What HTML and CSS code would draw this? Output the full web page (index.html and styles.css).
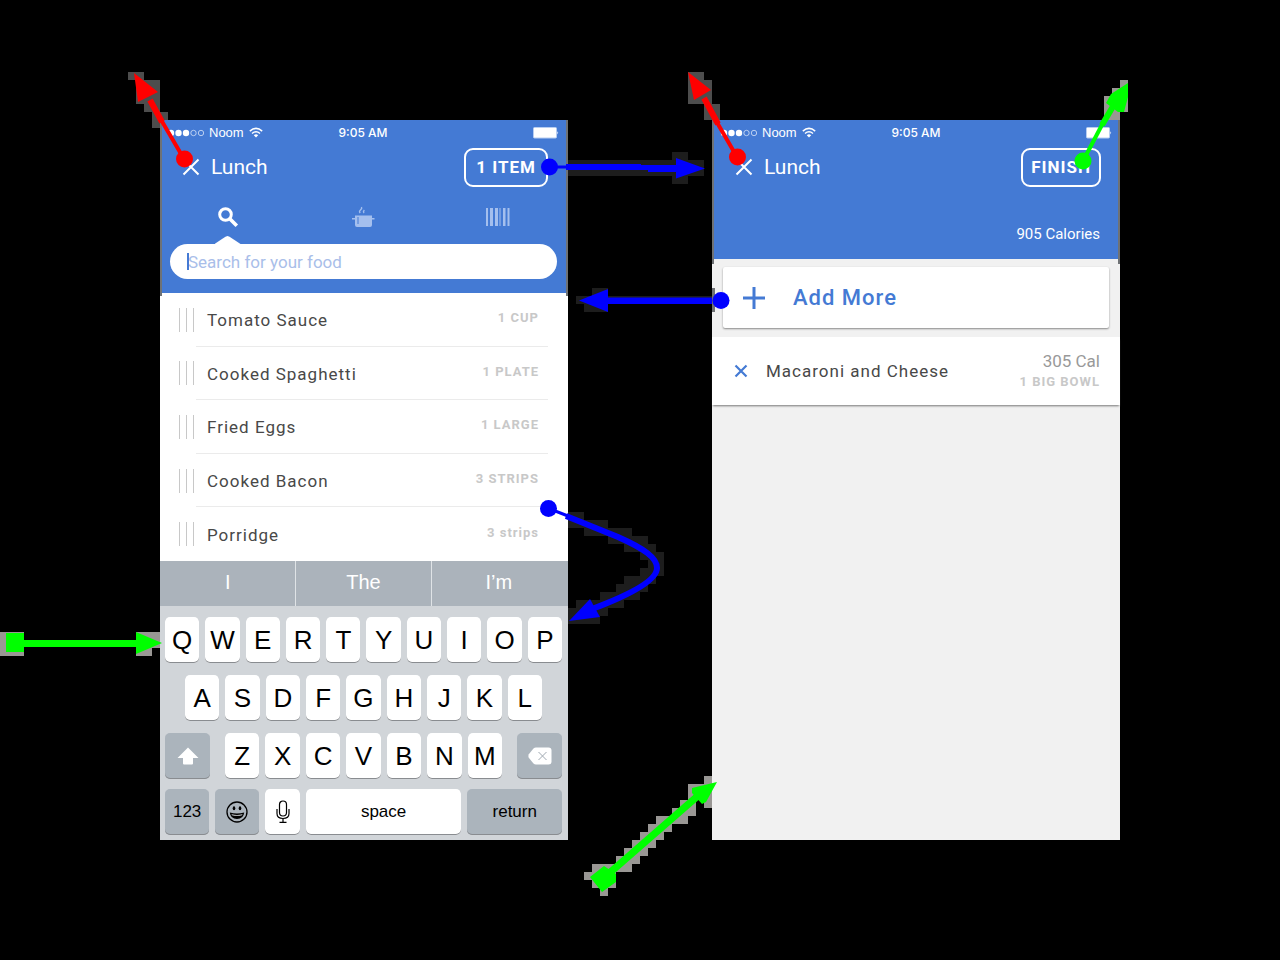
FILE: index.html
```html
<!DOCTYPE html>
<html lang="en">
<head>
<meta charset="utf-8">
<meta name="viewport" content="width=device-width, initial-scale=1">
<title>Lunch log flow</title>
<link rel="stylesheet" href="styles.css">
</head>
<body>
<svg class="defs" aria-hidden="true">
  <symbol id="signal" viewBox="0 0 37 8">
    <g fill="#fff"><circle cx="4" cy="4" r="3.200"/><circle cx="11.500" cy="4" r="3.200"/><circle cx="19" cy="4" r="3.200"/></g>
    <g fill="none" stroke="#d5e2f8" stroke-width=".8"><circle cx="26.500" cy="4" r="2.700"/><circle cx="34" cy="4" r="2.700"/></g>
  </symbol>
  <symbol id="wifi" viewBox="0 0 14 11">
    <g fill="none" stroke="#fff" stroke-width="1.500"><path d="M.8 4.100Q7-1.300 13.200 4.100"/><path d="M3 6.500Q7 3.100 11 6.500"/></g>
    <path d="M4.800 8.200Q7 6.400 9.200 8.200L7 10.600Z" fill="#fff"/>
  </symbol>
  <symbol id="battery" viewBox="0 0 26 12">
    <rect x=".5" y=".5" width="23" height="10.500" rx="1" fill="#fff" stroke="#b7cdf1"/>
    <path d="M24.400 4.200q1.600 1.600 0 3.200z" fill="#fff"/>
  </symbol>
  <symbol id="cross" viewBox="0 0 18 18"><path d="M1.500 1.500l15 15M16.500 1.500l-15 15" fill="none" stroke="currentColor" stroke-width="2"/></symbol>
</svg>
<main class="board">
  <section class="phone" aria-label="Search food">
    <header class="header">
      <div class="status">
        <div class="carrier"><svg class="signal"><use href="#signal"/></svg><span>Noom</span><svg class="wifi"><use href="#wifi"/></svg></div>
        <span class="time">9:05 AM</span>
        <svg class="battery"><use href="#battery"/></svg>
      </div>
      <div class="titlebar">
        <button class="close" aria-label="Close"><svg><use href="#cross"/></svg></button>
        <h1>Lunch</h1>
        <button class="outline">1 ITEM</button>
      </div>
      <nav class="tabs">
        <button class="tab active" aria-label="Search">
          <svg width="22" height="22" viewBox="0 0 22 22"><circle cx="8.500" cy="8.500" r="5.800" fill="none" stroke="#fff" stroke-width="3"/><path d="M12.800 12.800l7 7" stroke="#fff" stroke-width="3.600"/></svg>
        </button>
        <button class="tab" aria-label="Recipes">
          <svg width="24" height="22" viewBox="0 0 24 22" fill="#a4bfee"><path d="M4 9.500h17v2.500h2.500v1.600H21v5.400q0 2-2 2H6q-2 0-2-2v-5.400H1V12h3z"/><path d="M7 11v7" stroke="#447ad4" stroke-width="1"/><path d="M9.200 7q-1.500-1.500.3-3T10.500 1M13 7q-1.200-1.500.3-3" fill="none" stroke="#a4bfee" stroke-width="1.400"/></svg>
        </button>
        <button class="tab" aria-label="Scan barcode">
          <svg width="24" height="18" viewBox="0 0 24 18" fill="#a4bfee"><path d="M0 0h2v18H0zM4 0h3v18H4zM9 0h3v18H9zM13.500 0h1v18h-1zM17 0h2.500v18H17zM21.500 0h2v18h-2z"/></svg>
        </button>
      </nav>
      <label class="search"><input type="text" aria-label="Search for your food" placeholder="Search for your food"></label>
    </header>
    <ul class="foods">
      <li><i class="grip"></i><div class="food"><span>Tomato Sauce</span><small>1 CUP</small></div></li>
      <li><i class="grip"></i><div class="food"><span>Cooked Spaghetti</span><small>1 PLATE</small></div></li>
      <li><i class="grip"></i><div class="food"><span>Fried Eggs</span><small>1 LARGE</small></div></li>
      <li><i class="grip"></i><div class="food"><span>Cooked Bacon</span><small>3 STRIPS</small></div></li>
      <li><i class="grip"></i><div class="food"><span>Porridge</span><small>3 strips</small></div></li>
    </ul>
    <div class="suggestions"><button>I</button><button>The</button><button>I’m</button></div>
    <div class="keyboard">
      <div class="keys"><button>Q</button><button>W</button><button>E</button><button>R</button><button>T</button><button>Y</button><button>U</button><button>I</button><button>O</button><button>P</button></div>
      <div class="keys middle"><button>A</button><button>S</button><button>D</button><button>F</button><button>G</button><button>H</button><button>J</button><button>K</button><button>L</button></div>
      <div class="keys lower">
        <button class="dark" aria-label="Shift"><svg width="22" height="18" viewBox="0 0 22 18"><path d="M11 .5L21.500 11H16v5.500q0 1-1 1H7q-1 0-1-1V11H.5z" fill="#fff"/></svg></button>
        <div class="keys letters"><button>Z</button><button>X</button><button>C</button><button>V</button><button>B</button><button>N</button><button>M</button></div>
        <button class="dark" aria-label="Delete"><svg width="24" height="18" viewBox="0 0 24 18"><path d="M8 .5h12.500q3 0 3 3v11q0 3-3 3H8q-1.500 0-2.500-1L.8 10.800Q0 9 .8 7.200L5.500 1.500q1-1 2.500-1z" fill="#fff"/><path d="M10.500 5l8 8M18.500 5l-8 8" stroke="#a0a9b2" stroke-width="1"/></svg></button>
      </div>
      <div class="keys bottom">
        <button class="dark mode">123</button>
        <button class="dark" aria-label="Emoji"><svg width="22" height="22" viewBox="0 0 22 22"><circle cx="11" cy="11" r="10" fill="none" stroke="#000" stroke-width="1.300"/><ellipse cx="8" cy="7.300" rx="1.300" ry="2"/><ellipse cx="14" cy="7.300" rx="1.300" ry="2"/><path d="M3.800 11.500q7.200 2.200 14.400 0Q17.500 18 11 18t-7.200-6.500z"/><path d="M5.500 13.300q5.500 1.400 11 0l-.4.900q-4.800 1.200-10.200 0z" fill="#dde1e4"/></svg></button>
        <button aria-label="Dictate"><svg width="14" height="24" viewBox="0 0 14 24" fill="none" stroke="#000" stroke-width="1.200"><rect x="3.500" y="1" width="7" height="15" rx="3.500"/><path d="M1 9v4.500q0 5 6 5t6-5V9M7 18.500V22M3.500 22.400h7"/></svg></button>
        <button>space</button>
        <button class="dark">return</button>
      </div>
    </div>
  </section>

  <section class="phone" aria-label="Meal summary">
    <header class="header summary">
      <div class="status">
        <div class="carrier"><svg class="signal"><use href="#signal"/></svg><span>Noom</span><svg class="wifi"><use href="#wifi"/></svg></div>
        <span class="time">9:05 AM</span>
        <svg class="battery"><use href="#battery"/></svg>
      </div>
      <div class="titlebar">
        <button class="close" aria-label="Close"><svg><use href="#cross"/></svg></button>
        <h1>Lunch</h1>
        <button class="outline">FINISH</button>
      </div>
      <p class="total">905 Calories</p>
    </header>
    <button class="add"><svg width="24" height="24" viewBox="0 0 24 24"><path d="M12 1v22M1 12h22" stroke="#447ad4" stroke-width="3"/></svg><span>Add More</span></button>
    <article class="meal">
      <button class="remove" aria-label="Remove Macaroni and Cheese"><svg viewBox="0 0 14 14"><path d="M1.500 1.500l11 11M12.500 1.500l-11 11" stroke="#447ad4" stroke-width="2.200"/></svg></button>
      <span class="name">Macaroni and Cheese</span>
      <div class="amount"><span>305 Cal</span><small>1 BIG BOWL</small></div>
    </article>
  </section>

  <svg class="flow" viewBox="0 0 1280 960" preserveAspectRatio="none" aria-hidden="true">
    <path fill="#4d4d4d" d="M128 72h16v8h16v32h8v8h-8v8h-8v-16h-8v-8h-8V80h-8zM688 72h16v8h8v24h8v16h-16v-16h-16z"/>
    <path fill="#6f7275" d="M160 120h2v176h-2zM566 120h2v176h-2zM712 120h2v144h-2zM1118 120h2v144h-2zM712 288h3v24h-3z"/>
    <path fill="#1d1d1d" d="M568 160h104v-8h16v8h16v16h-16v8h-16v-8H568zM576 296h8v8h-8zM584 296h8v-8h16v8h104v8H608v8h-24z"/>
    <path fill="#1d1d1d" d="M568 512h16v16h-16zM584 520h24v16h-24zM608 528h24v16h-24zM624 536h24v16h-24zM640 544h16v16h-16zM648 552h16v24h-16zM640 568h16v16h-16zM624 576h24v16h-24zM616 584h24v16h-24zM600 592h24v16h-24zM576 600h32v16h-32zM568 608h32v16h-32z"/>
    <path fill="#999794" d="M1120 80h8v32h-8v8h-16V96h8v-8h8zM0 632h24v24H0zM136 632h24v16h-8v8h-16z"/>
    <path fill="#999794" d="M704 776h8v32h-8zM688 784h24v16h-24zM680 800h16v16h-16zM672 808h16v16h-16zM656 816h24v8h-24zM656 824h16v8h-16zM648 824h16v16h-16zM640 832h16v16h-16zM632 840h16v16h-16zM624 848h16v16h-16zM616 856h16v16h-16zM592 864h24v24h-24zM584 872h8v8h-8zM600 888h8v8h-8z"/>
    <g fill="none" stroke="#f00"><path stroke-width="4" d="M184 159L160 118M737 157L715 119"/><path stroke-width="6" d="M162 122L150 100M718 124L704 98"/></g>
    <path fill="#f00" d="M134 73l4 29 20-10zM688 72l6 28 17-10z"/>
    <circle cx="184.500" cy="159" r="8.500" fill="#f00"/><circle cx="737.500" cy="157" r="8.500" fill="#f00"/>
    <path fill="none" stroke="#0f0" stroke-width="4" d="M1083 161L1104 121"/>
    <path fill="none" stroke="#0f0" stroke-width="6" d="M1102 125L1115 103"/>
    <path fill="#0f0" d="M1128 83v14l-4 15h-6l-12-9 5-9z"/><circle cx="1083" cy="161" r="8.500" fill="#0f0"/>
    <path fill="#0f0" d="M6 633h18v7h112v-8l26 11-26 11v-7H24v5H6z"/>
    <path fill="none" stroke="#0f0" stroke-width="7" d="M606 876L700 794"/>
    <path fill="#0f0" d="M717 782l-25 6 0 5 10 11 4-2zM604 866l12 8v8l-14 10-12-15z"/>
    <path fill="none" stroke="#00f" stroke-width="3" d="M549 167h19M549 508.500l19 7.500"/>
    <path fill="#00f" d="M566 164h75v1h35v-7l29 10.500-29 10V172h-28v-2h-82zM712 297.500H608V289l-29 11.500 29 11.500v-8h104z"/>
    <path fill="none" stroke="#00f" stroke-width="6" d="M566 516L618 537C645 549 657 558 657 568C657 580 632 594 592 609"/>
    <path fill="#00f" d="M569 621l21-22 10 18z"/>
    <g fill="#00f"><circle cx="549.500" cy="167" r="8.500"/><circle cx="721" cy="300.500" r="8.500"/><circle cx="548.500" cy="508.500" r="8.500"/></g>
  </svg>
</main>
</body>
</html>
```
FILE: styles.css
```css
* { box-sizing: border-box; }
body { margin: 0; background: #000; font-family: Roboto, "Liberation Sans", sans-serif; }
h1, p, ul { margin: 0; padding: 0; font-weight: 400; }
button { padding: 0; border: 0; background: none; color: inherit; font: inherit; }
button svg { display: block; }
.defs { position: absolute; width: 0; height: 0; }

.board {
  position: relative;
  display: grid;
  grid-template-columns: 1fr 1fr;
  column-gap: 15%;
  padding: 120px 12.5%;
  min-height: 100vh;
}
.phone { display: flex; flex-direction: column; min-width: 0; background: #f1f1f1; }
.flow { position: absolute; inset: 0; width: 100%; height: 100%; pointer-events: none; }

.header { background: #447ad4; color: #fff; padding-bottom: 14px; }
.status {
  display: grid;
  grid-template-columns: 1fr auto 1fr;
  align-items: center;
  height: 25px;
  padding: 0 9px 0 7px;
  font: 13px/16px "Liberation Sans", sans-serif;
}
.carrier { display: flex; align-items: center; gap: 5px; }
.signal { width: 37px; height: 8px; }
.wifi { width: 14px; height: 11px; }
.time { font-family: Inter, sans-serif; font-weight: 500; font-size: 12px; }
.battery { width: 26px; height: 12px; justify-self: end; }
.titlebar { display: flex; align-items: center; gap: 11px; padding: 2px 20px 0 22px; height: 42px; }
.close, .close svg { width: 18px; height: 18px; }
.titlebar h1 { flex: 1; font-size: 21px; line-height: 26px; }
.outline {
  height: 39px;
  padding: 0 10px;
  border: 2px solid #fff;
  border-radius: 9px;
  font-size: 17px;
  font-weight: 700;
  letter-spacing: 1px;
}
.tabs { display: grid; grid-template-columns: repeat(3, 1fr); height: 57px; padding: 2px 3px 0 0; }
.tab { position: relative; display: grid; place-items: center; }
.tab.active::after {
  content: "";
  position: absolute;
  bottom: 0;
  left: calc(50% - 13px);
  width: 26px;
  height: 8px;
  background: #fff;
  clip-path: polygon(0 100%, 42% 8%, 50% 0, 58% 8%, 100% 100%);
}
.search { position: relative; display: block; margin: 0 11px 0 10px; }
.search::before { content: ""; position: absolute; left: 17px; top: 9px; width: 2px; height: 17px; background: #447ad4; }
.search input {
  display: block;
  width: 100%;
  height: 35px;
  padding: 0 18px;
  border: 0;
  border-radius: 18px;
  background: #fff;
  font: 17px/20px Roboto, sans-serif;
}
.search input::placeholder { color: #a9bee9; opacity: 1; }

.foods { display: grid; grid-template-rows: repeat(5, 1fr); height: 268px; list-style: none; background: #fff; }
.foods li { display: flex; align-items: stretch; padding: 0 20px 0 19px; }
.grip {
  align-self: center;
  width: 15px;
  height: 24px;
  margin-right: 2px;
  border: solid #c8c8c8;
  border-width: 0 1px;
  background: linear-gradient(#c8c8c8, #c8c8c8) center / 1px 100% no-repeat;
}
.food {
  flex: 1;
  display: flex;
  align-items: center;
  justify-content: space-between;
  padding: 2px 9px 0 11px;
  border-bottom: 1px solid #ebebeb;
  color: #484848;
  font-size: 17px;
  letter-spacing: 1px;
}
.foods li:last-child .food { border-bottom-color: transparent; }
small { color: #c8c8c8; font-size: 13px; line-height: 16px; font-weight: 700; letter-spacing: 1px; }
.food small { padding-bottom: 4px; }

.suggestions { display: grid; grid-template-columns: repeat(3, 1fr); height: 45px; padding-right: 2px; background: #abb3bb; color: #fff; font: 20px "Liberation Sans", sans-serif; }
.suggestions button { padding-bottom: 3px; }
.suggestions button + button { border-left: 1px solid #dfe3e6; }
.keyboard { flex: 1; padding: 11px 6px 3px 5px; background: #d1d5d9; display: grid; grid-template-rows: repeat(4, 46px); row-gap: 12px; }
.keys { display: flex; gap: 6px; }
.keys > button {
  flex: 1;
  min-width: 0;
  display: grid;
  place-items: center;
  border-radius: 5px;
  background: #fff;
  box-shadow: inset 0 -1px #898c90;
  color: #000;
  font: 26px "Liberation Sans", sans-serif;
}
.keys > .dark { background: #abb4bc; }
.middle { padding: 0 20px; }
.lower { gap: 15px; }
.lower > .dark { flex: 0 0 45px; }
.letters { flex: 1; }
.bottom { display: grid; grid-template-columns: 44fr 44fr 34fr 155fr 94fr; gap: 6px; margin-top: -2px; margin-bottom: 2px; }
.bottom > button { font-size: 17px; }

.summary { padding-bottom: 15px; }
.summary .status { padding: 0 8px; }
.summary .titlebar { padding: 2px 19px 0 23px; }
.summary .outline { padding: 0 8px; }
.total { padding: 37px 20px 0; text-align: right; font-size: 15px; line-height: 20px; }
.add {
  display: flex;
  align-items: center;
  gap: 27px;
  height: 61px;
  margin: 8px 11px 9px 11px;
  padding-left: 19px;
  border-radius: 2px;
  background: #fff;
  box-shadow: 0 1px 2px #888;
  color: #447ad4;
  font-size: 22px;
  font-weight: 500;
  letter-spacing: 1px;
}
.meal { display: flex; align-items: center; height: 68px; padding: 0 20px 0 22px; background: #fff; box-shadow: 0 2px 2px -1px #777; color: #484848; }
.remove, .remove svg { width: 14px; height: 14px; }
.name { flex: 1; margin-left: 18px; font-size: 17px; letter-spacing: 1px; }
.amount { display: grid; text-align: right; color: #999; font-size: 17px; line-height: 22px; }
.amount small { line-height: 20px; }
```
